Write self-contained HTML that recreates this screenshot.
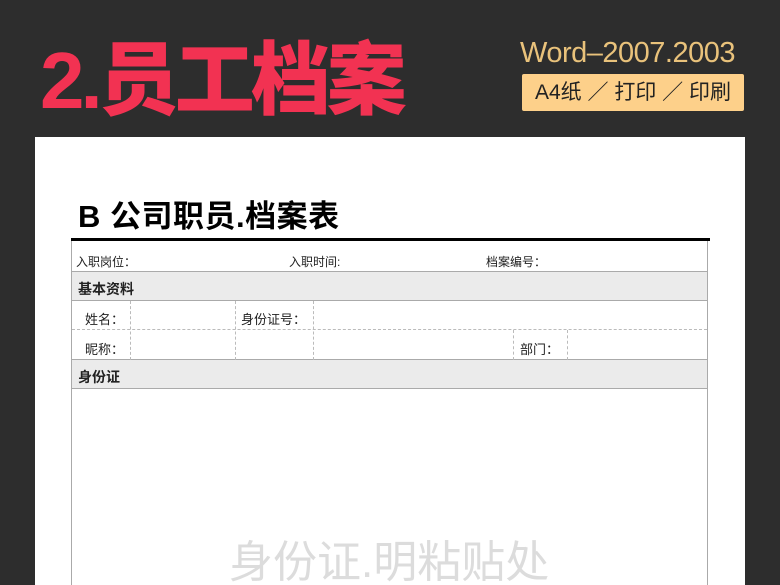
<!DOCTYPE html><html><head><meta charset="utf-8"><style>
html,body{margin:0;width:780px;height:585px;overflow:hidden}
body{background:#2d2d2d;position:relative;font-family:"Liberation Sans","Noto Sans CJK SC",sans-serif}
.a{position:absolute;white-space:nowrap}
.t{left:40px;top:31px;font-size:80px;font-weight:900;color:#f23252;letter-spacing:-4px;line-height:100px}
.w{left:520px;top:36px;font-size:29px;color:#e9c27b;font-weight:300;line-height:34px;letter-spacing:-0.5px}
.b{left:522px;top:74px;width:222px;height:37px;background:#fdd08a;border-radius:2px;font-size:21px;color:#222;line-height:37px;text-align:center}
.p{left:35px;top:137px;width:710px;height:448px;background:#fff}
.h{left:78px;top:196px;font-size:31px;font-weight:bold;color:#000;line-height:42px;letter-spacing:0.5px}
.bar{left:71px;top:238px;width:639px;height:3px;background:#000}
.box{left:71px;top:241px;width:635px;height:344px;border-left:1px solid #aaa;border-right:1px solid #aaa}
.row{position:absolute;left:72px;width:635px;border-bottom:1px solid #aaa;font-size:13px;color:#222}
.g{background:#ebebeb;font-weight:bold;font-size:14px}
.v{position:absolute;border-left:1px dashed #bbb}
.s{font-size:12px}
</style></head><body>
<div class="a t">2.员工档案</div>
<div class="a w">Word–2007.2003</div>
<div class="a b">A4纸 ／ 打印 ／ 印刷</div>
<div class="a p"></div>
<div class="a h">B 公司职员.档案表</div>
<div class="a bar"></div>
<div class="a box"></div>
<div class="row" style="top:241px;height:30px"><span class="a s" style="left:4px;top:12px">入职岗位：</span><span class="a s" style="left:217px;top:12px">入职时间:</span><span class="a s" style="left:414px;top:12px">档案编号：</span></div>
<div class="row g" style="top:272px;height:28px"><span class="a" style="left:6px;top:7px">基本资料</span></div>
<div class="row" style="top:301px;height:28px;border-bottom:1px dashed #bbb"><span class="a" style="left:13px;top:8px">姓名：</span><span class="a" style="left:169px;top:8px">身份证号：</span></div>
<div class="row" style="top:330px;height:29px"><span class="a" style="left:13px;top:9px">昵称：</span><span class="a" style="left:448px;top:9px">部门：</span></div>
<div class="row g" style="top:360px;height:28px"><span class="a" style="left:6px;top:7px">身份证</span></div>
<div class="v" style="left:130px;top:301px;height:59px"></div>
<div class="v" style="left:235px;top:301px;height:59px"></div>
<div class="v" style="left:313px;top:301px;height:59px"></div>
<div class="v" style="left:513px;top:330px;height:30px"></div>
<div class="v" style="left:567px;top:330px;height:30px"></div>
<div class="a" style="left:229px;top:537px;font-size:44px;color:#dcdcdc;line-height:52px">身份证.明粘贴处</div>
</body></html>
